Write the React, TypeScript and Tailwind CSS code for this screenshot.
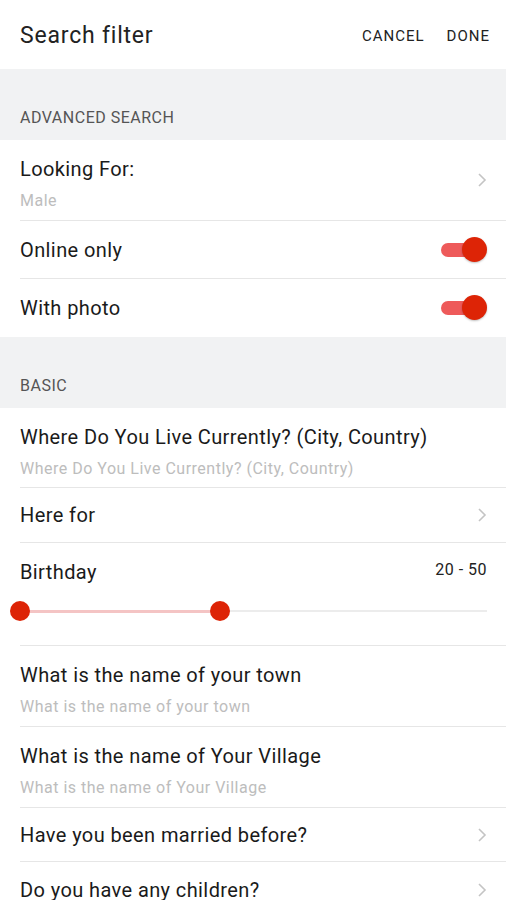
import React from "react";

const font = { fontFamily: "Roboto, 'Liberation Sans', sans-serif" };

function Chevron() {
  return (
    <svg width="10" height="16" viewBox="0 0 10 16" className="shrink-0">
      <path d="M2 2 L8 8 L2 14" fill="none" stroke="#c4c4c4" strokeWidth="1.6" />
    </svg>
  );
}

function Toggle() {
  return (
    <div className="relative w-[46px] h-[26px] flex items-center">
      <div className="h-[14px] w-[42px] rounded-full bg-[#ee5a5a]" />
      <div className="absolute right-0 top-0 w-[25px] h-[25px] rounded-full bg-[#dd2406] shadow-[0_1px_2px_rgba(0,0,0,0.25)]" />
    </div>
  );
}

function SectionHeader({ label }: { label: string }) {
  return (
    <div className="bg-[#f1f2f3] h-[71px] flex items-end pb-[10px] pl-[20px]">
      <span className="text-[16px] text-[#555] tracking-[0.5px]">{label}</span>
    </div>
  );
}

function Row({
  title,
  sub,
  chevron,
  toggle,
  last,
  height,
}: {
  title: string;
  sub?: string;
  chevron?: boolean;
  toggle?: boolean;
  last?: boolean;
  height: string;
}) {
  return (
    <div className="pl-[20px]">
      <div className={`flex items-center pr-[19px] ${height} ${last ? "" : "border-b border-[#e6e6e6]"}`}>
        <div className={`flex-1 flex flex-col ${sub ? "self-start pt-[17px]" : ""}`}>
          <span className="text-[20px] text-[#1a1a1a] leading-[24px] tracking-[0.4px]">{title}</span>
          {sub && (
            <span className="text-[16px] text-[#bdbdbd] leading-[20px] mt-[10px] tracking-[0.5px]">{sub}</span>
          )}
        </div>
        {chevron && <Chevron />}
        {toggle && <Toggle />}
      </div>
    </div>
  );
}

export default function App() {
  return (
    <div className="w-[506px] h-[900px] bg-white overflow-hidden" style={font}>
      <div className="h-[69px] flex items-center justify-between pl-[20px] pr-[16px] pt-[3px]">
        <span className="text-[23px] text-[#222] tracking-[0.8px]">Search filter</span>
        <div className="flex gap-[22px] text-[15px] text-[#222] tracking-[1px]">
          <span>CANCEL</span>
          <span>DONE</span>
        </div>
      </div>

      <SectionHeader label="ADVANCED SEARCH" />
      <Row title="Looking For:" sub="Male" chevron height="h-[81px]" />
      <Row title="Online only" toggle height="h-[58px]" />
      <Row title="With photo" toggle last height="h-[58px]" />

      <SectionHeader label="BASIC" />
      <Row
        title="Where Do You Live Currently? (City, Country)"
        sub="Where Do You Live Currently? (City, Country)"
        height="h-[80px]"
      />
      <Row title="Here for" chevron height="h-[55px]" />

      <div className="pl-[20px]">
        <div className="h-[103px] border-b border-[#e6e6e6] pr-[19px] flex flex-col">
          <div className="flex justify-between items-start pt-[17px]">
            <span className="text-[20px] text-[#1a1a1a] leading-[24px] tracking-[0.4px]">Birthday</span>
            <span className="text-[16px] text-[#222] leading-[20px] tracking-[0.5px]">20 - 50</span>
          </div>
          <div className="relative mt-[17px] -ml-[10px] h-[20px] flex items-center">
            <div className="h-[2px] w-full bg-[#ececec]" />
            <div className="absolute left-[1px] w-[200px] h-[3px] bg-[#f4c4c4]" />
            <div className="absolute left-0 w-[20px] h-[20px] rounded-full bg-[#dd2406]" />
            <div className="absolute left-[200px] w-[20px] h-[20px] rounded-full bg-[#dd2406]" />
          </div>
        </div>
      </div>

      <Row title="What is the name of your town" sub="What is the name of your town" height="h-[81px]" />
      <Row title="What is the name of Your Village" sub="What is the name of Your Village" height="h-[81px]" />
      <Row title="Have you been married before?" chevron height="h-[54px]" />
      <Row title="Do you have any children?" chevron height="h-[56px]" />
    </div>
  );
}
